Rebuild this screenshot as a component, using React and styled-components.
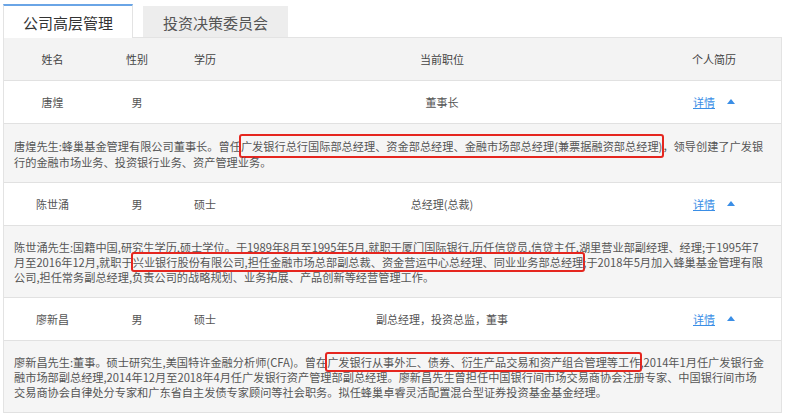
import React from 'react'
import styled, { createGlobalStyle } from 'styled-components'

const GlobalStyle = createGlobalStyle`
  html, body {
    margin: 0;
    padding: 0;
    background: #fff;
    font-family: "Noto Sans CJK SC", "Liberation Sans", sans-serif;
  }
`

// \n marks where the reference wraps its lines
const managers = [
  {
    name: '唐煌',
    sex: '男',
    edu: '',
    title: '董事长',
    before: '唐煌先生:蜂巢基金管理有限公司董事长。曾任',
    mark: '广发银行总行国际部总经理、资金部总经理、金融市场部总经理(兼票据融资部总经理)',
    after: '，领导创建了广发银\n行的金融市场业务、投资银行业务、资产管理业务。',
    tall: true,
  },
  {
    name: '陈世涌',
    sex: '男',
    edu: '硕士',
    title: '总经理(总裁)',
    before:
      '陈世涌先生:国籍中国,研究生学历,硕士学位。于1989年8月至1995年5月,就职于厦门国际银行,历任信贷员,信贷主任,湖里营业部副经理、经理;于1995年7\n月至2016年12月,就职于',
    mark: '兴业银行股份有限公司,担任金融市场总部副总裁、资金营运中心总经理、同业业务部总经理',
    after: ';于2018年5月加入蜂巢基金管理有限\n公司,担任常务副总经理,负责公司的战略规划、业务拓展、产品创新等经营管理工作。',
  },
  {
    name: '廖新昌',
    sex: '男',
    edu: '硕士',
    title: '副总经理，投资总监，董事',
    before: '廖新昌先生:董事。硕士研究生,美国特许金融分析师(CFA)。曾在',
    mark: '广发银行从事外汇、债券、衍生产品交易和资产组合管理等工作',
    after:
      ',2014年1月任广发银行金\n融市场部副总经理,2014年12月至2018年4月任广发银行资产管理部副总经理。廖新昌先生曾担任中国银行间市场交易商协会注册专家、中国银行间市场\n交易商协会自律处分专家和广东省自主发债专家顾问等社会职务。拟任蜂巢卓睿灵活配置混合型证券投资基金基金经理。',
  },
]

const Page = styled.div`
  padding: 4px 4px 0 3px;
`

const Tabs = styled.div`
  display: flex;
  align-items: flex-end;
  gap: 10px;
`

const Tab = styled.div`
  box-sizing: border-box;
  display: flex;
  align-items: center;
  justify-content: center;
  font-size: 15px;
  color: ${(p) => (p.active ? '#333' : '#555')};
  width: ${(p) => (p.active ? '130px' : '145px')};
  height: ${(p) => (p.active ? '34px' : '31px')};
  background: ${(p) => (p.active ? '#fff' : '#ededed')};
  border: 1px solid ${(p) => (p.active ? '#e3e3e3' : '#ededed')};
  border-top: ${(p) => (p.active ? '2px solid #6aa5e6' : '1px solid #ededed')};
  border-bottom: none;
  margin-bottom: ${(p) => (p.active ? '-1px' : '0')};
  position: relative;
`

const Table = styled.div`
  border: 1px solid #e3e3e3;
  border-bottom: none;
  font-size: 11px;
  color: #555;
`

const Row = styled.div`
  display: grid;
  grid-template-columns: 97px 72px 64px 410px 1fr;
  align-items: center;
  height: 42px;
  border-bottom: 1px solid #e1e1e1;
  background: ${(p) => (p.head ? '#f3f3f3' : '#fff')};
  color: ${(p) => (p.head ? '#444' : '#555')};
`

const Cell = styled.div`
  text-align: center;
  white-space: nowrap;
`

const Action = styled.div`
  display: flex;
  align-items: center;
  justify-content: center;
  gap: 12px;
`

const Link = styled.a`
  color: #3a8ee6;
  text-decoration: underline;
  cursor: pointer;
`

const Caret = styled.span`
  width: 0;
  height: 0;
  border-left: 4px solid transparent;
  border-right: 4px solid transparent;
  border-bottom: 5px solid #3a8ee6;
  margin-top: -1px;
`

const Detail = styled.div`
  background: #f5f5f5;
  border-bottom: 1px solid #e1e1e1;
  padding: 14px 4px 12px 10px;
  font-size: 11.2px;
  line-height: ${(p) => (p.tall ? '16px' : '15px')};
  color: #555;
  white-space: pre-line;
`

const Mark = styled.span`
  border: 2px solid #e5261f;
  border-radius: 3px;
  padding: ${(p) => (p.tall ? '2px 0' : '0')};
  margin: 0 -2px;
`

const App = () => {
  return (
    <Page>
      <GlobalStyle />
      <Tabs>
        <Tab active>公司高层管理</Tab>
        <Tab>投资决策委员会</Tab>
      </Tabs>
      <Table>
        <Row head>
          <Cell>姓名</Cell>
          <Cell>性别</Cell>
          <Cell>学历</Cell>
          <Cell>当前职位</Cell>
          <Cell>个人简历</Cell>
        </Row>
        {managers.map((m) => (
          <React.Fragment key={m.name}>
            <Row>
              <Cell>{m.name}</Cell>
              <Cell>{m.sex}</Cell>
              <Cell>{m.edu}</Cell>
              <Cell>{m.title}</Cell>
              <Action>
                <Link>详情</Link>
                <Caret />
              </Action>
            </Row>
            <Detail tall={m.tall}>
              {m.before}
              <Mark tall={m.tall}>{m.mark}</Mark>
              {m.after}
            </Detail>
          </React.Fragment>
        ))}
      </Table>
    </Page>
  )
}

export default App
